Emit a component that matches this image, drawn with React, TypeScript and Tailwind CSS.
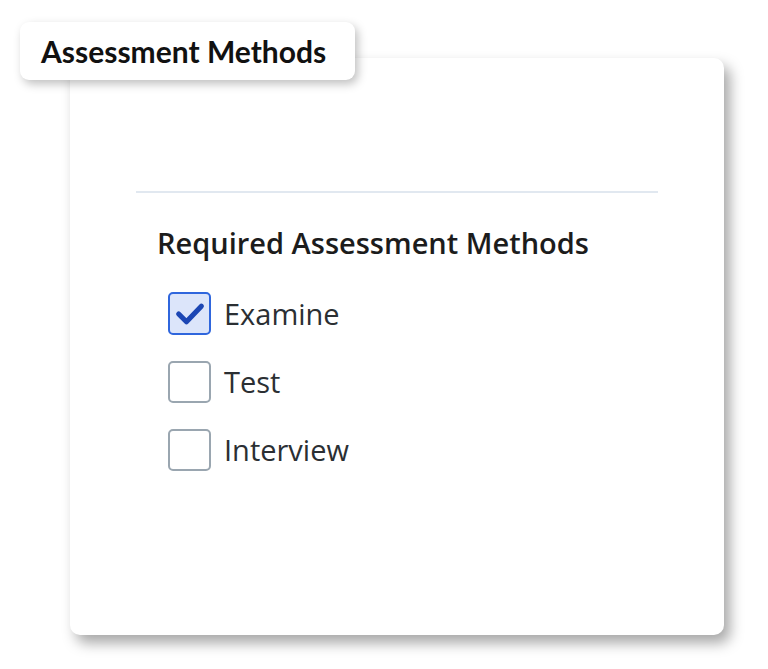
const items = [
  { label: 'Examine', checked: true },
  { label: 'Test', checked: false },
  { label: 'Interview', checked: false },
]

const Checkbox = ({ checked }: { checked: boolean }) => {
  if (checked) {
    return (
      <span className="flex h-[43px] w-[43px] shrink-0 items-center justify-center rounded-[5px] border-2 border-[#2f66dd] bg-[#dce5fa]">
        <svg viewBox="0 0 24 24" className="h-[34px] w-[34px]" fill="none">
          <path
            d="M4 12l5.5 5.5L20 6.5"
            stroke="#1c46b4"
            strokeWidth="3.6"
            strokeLinecap="round"
            strokeLinejoin="round"
          />
        </svg>
      </span>
    )
  }
  return (
    <span className="h-[42px] w-[43px] shrink-0 rounded-[5px] border-2 border-[#9aa6b0] bg-white" />
  )
}

const App = () => {
  return (
    <div className="h-[669px] w-[768px] bg-white pl-[70px] pt-[58px]">
      <div className="relative h-[577px] w-[654px] rounded-[10px] bg-white shadow-[6px_8px_14px_rgba(0,0,0,0.35)]">
        <div className="absolute -left-[50px] -top-[36px] flex h-[58px] w-[335px] items-center rounded-[9px] bg-white pl-[21px] shadow-[3px_4px_10px_rgba(0,0,0,0.25)]">
          <span className="font-['Lato',sans-serif] text-[30px] font-bold text-[#111]">
            Assessment Methods
          </span>
        </div>
        <div className="px-[66px] pt-[133px]">
          <hr className="h-[2px] border-0 bg-[#e1e8f0]" />
          <div className="px-[21px] pt-[32px] font-['Open_Sans',sans-serif]">
            <h2 className="text-[29px] font-semibold leading-[36px] text-[#1c1c1c]">
              Required Assessment Methods
            </h2>
            <div className="mt-[31px] flex flex-col gap-[26px] pl-[11px]">
              {items.map((item) => (
                <label key={item.label} className="flex items-center gap-[13px]">
                  <Checkbox checked={item.checked} />
                  <span className="text-[29px] leading-[36px] text-[#2b2f33]">
                    {item.label}
                  </span>
                </label>
              ))}
            </div>
          </div>
        </div>
      </div>
    </div>
  )
}

export default App
